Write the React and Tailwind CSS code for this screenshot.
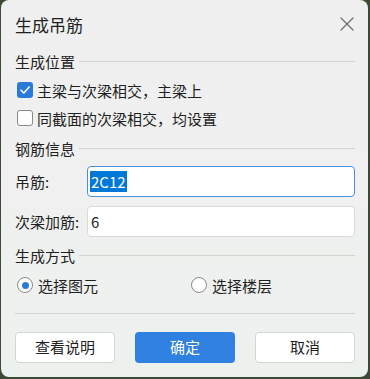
import React, { useState } from 'react';

const font = { fontFamily: '"Noto Sans CJK SC", "Noto Sans", sans-serif' };

const SectionLabel = ({ children, className = '' }) => (
  <div className={`flex items-center h-[26px] ${className}`}>
    <span className="text-[15px] text-[#1f1f1f] leading-none">{children}</span>
    <div className="flex-1 h-px bg-[#d2d4d2] ml-[4px]" />
  </div>
);

const Checkbox = ({ checked, label, onChange }) => (
  <label className="flex items-center h-[28px] pl-[2px] cursor-pointer" onClick={onChange}>
    {checked ? (
      <span className="w-[16px] h-[16px] rounded-[3px] bg-[#2a7bd9] flex items-center justify-center">
        <svg width="12" height="12" viewBox="0 0 12 12" fill="none">
          <path d="M2 6.2 L4.8 9 L10.2 3" stroke="white" strokeWidth="1.6" strokeLinecap="round" strokeLinejoin="round" />
        </svg>
      </span>
    ) : (
      <span className="w-[16px] h-[16px] rounded-[3px] bg-white border border-[#8a8a8a]" />
    )}
    <span className="ml-[4px] text-[15px] text-[#1f1f1f] leading-none">{label}</span>
  </label>
);

const Radio = ({ checked, label, onChange }) => (
  <label className="flex items-center cursor-pointer" onClick={onChange}>
    <span className="w-[16px] h-[16px] rounded-full bg-white border border-[#8a8a8a] flex items-center justify-center">
      {checked && <span className="w-[7px] h-[7px] rounded-full bg-[#2a7bd9]" />}
    </span>
    <span className="ml-[5px] text-[15px] text-[#1f1f1f] leading-none">{label}</span>
  </label>
);

export default function App() {
  const [main, setMain] = useState(true);
  const [same, setSame] = useState(false);
  const [mode, setMode] = useState('element');

  return (
    <div className="w-[370px] h-[379px] bg-[#3b4a34] pl-[1px] pr-[2px] pb-[2px]" style={font}>
      <div className="w-full h-full rounded-[8px] bg-gradient-to-b from-[#eeefee] via-[#eff0ef] to-[#edf1ee] pl-[14px] pr-[13px] flex flex-col">
        <div className="h-[48px] flex items-center justify-between">
          <span className="text-[17px] text-[#1f1f1f] leading-none">生成吊筋</span>
          <button className="w-[20px] h-[20px] flex items-center justify-center mr-[-2px]">
            <svg width="14" height="14" viewBox="0 0 14 14" fill="none">
              <path d="M1 1 L13 13 M13 1 L1 13" stroke="#6b6b6b" strokeWidth="1.2" strokeLinecap="round" />
            </svg>
          </button>
        </div>

        <SectionLabel>生成位置</SectionLabel>
        <div className="mt-[2px]">
          <Checkbox checked={main} label="主梁与次梁相交，主梁上" onChange={() => setMain(!main)} />
          <Checkbox checked={same} label="同截面的次梁相交，均设置" onChange={() => setSame(!same)} />
        </div>

        <SectionLabel className="mt-[3px]">钢筋信息</SectionLabel>
        <div className="mt-[5px] flex items-center h-[31px]">
          <span className="w-[72px] text-[15px] text-[#1f1f1f] leading-none">吊筋:</span>
          <div className="flex-1 h-full rounded-[4px] bg-white border border-[#4a90e2] flex items-center pl-[2px]">
            <span className="bg-[#0078d7] text-white text-[15px] leading-[21px] px-[1px]">2C12</span>
          </div>
        </div>
        <div className="mt-[9px] flex items-center h-[31px]">
          <span className="w-[72px] text-[15px] text-[#1f1f1f] leading-none">次梁加筋:</span>
          <div className="flex-1 h-full rounded-[4px] bg-white border border-[#d9dbd9] flex items-center pl-[3px]">
            <span className="text-[#1f1f1f] text-[15px] leading-none">6</span>
          </div>
        </div>

        <SectionLabel className="mt-[5px]">生成方式</SectionLabel>
        <div className="mt-[3px] h-[28px] flex items-center pl-[2px]">
          <div className="w-[174px]">
            <Radio checked={mode === 'element'} label="选择图元" onChange={() => setMode('element')} />
          </div>
          <Radio checked={mode === 'floor'} label="选择楼层" onChange={() => setMode('floor')} />
        </div>

        <div className="mt-[14px] h-px bg-[#d2d4d2]" />

        <div className="mt-[18px] h-[31px] flex gap-[20px]">
          <button className="w-[100px] h-full rounded-[4px] bg-white border border-[#d4d6d4] text-[15px] text-[#1f1f1f]">查看说明</button>
          <button className="w-[100px] h-full rounded-[4px] bg-[#2f80e0] text-[15px] text-white">确定</button>
          <button className="w-[100px] h-full rounded-[4px] bg-white border border-[#d4d6d4] text-[15px] text-[#1f1f1f]">取消</button>
        </div>
      </div>
    </div>
  );
}
